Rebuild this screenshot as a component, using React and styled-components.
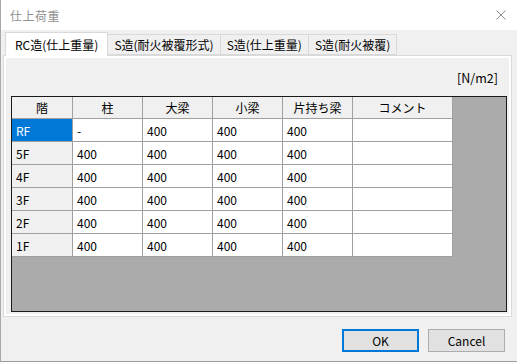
import React, { useState } from 'react'
import styled, { createGlobalStyle } from 'styled-components'

const Global = createGlobalStyle`
  html, body {
    margin: 0;
    padding: 0;
    background: #f0f0f0;
  }
  * {
    box-sizing: border-box;
  }
`

const FONT = `"Noto Sans CJK JP", "Noto Sans", sans-serif`

const Window = styled.div`
  width: 517px;
  height: 362px;
  display: flex;
  flex-direction: column;
  background: #f0f0f0;
  border-left: 1px solid #a8a8a8;
  border-bottom: 1px solid #9c9c9c;
  font-family: ${FONT};
  font-size: 12px;
  color: #000;
  overflow: hidden;
`

const TitleBar = styled.div`
  height: 30px;
  flex: none;
  display: flex;
  align-items: center;
  justify-content: space-between;
  padding: 0 9px 0 9px;
  background: #fff;
`

const Title = styled.span`
  color: #8f8f8f;
  font-size: 12px;
  letter-spacing: 0.5px;
`

const Close = styled.button`
  width: 14px;
  height: 14px;
  padding: 0;
  border: none;
  background: transparent;
  display: flex;
  align-items: center;
  justify-content: center;
  svg {
    width: 10px;
    height: 10px;
  }
`

const Body = styled.div`
  flex: 1;
  display: flex;
  flex-direction: column;
  padding: 2px 5px 0 2px;
`

const TabBar = styled.div`
  display: flex;
  align-items: flex-end;
  height: 23px;
  padding-left: 2px;
  position: relative;
  z-index: 1;
`

const Tab = styled.button`
  height: ${p => (p.$active ? '24px' : '21px')};
  margin-bottom: ${p => (p.$active ? '-1px' : '0')};
  margin-left: ${p => (p.$first ? '0' : '-1px')};
  padding: 0 ${p => (p.$active ? '9px' : '6px')};
  border: 1px solid #d9d9d9;
  border-bottom: ${p => (p.$active ? 'none' : '1px solid #d9d9d9')};
  background: ${p => (p.$active ? '#fff' : '#f0f0f0')};
  font-family: ${FONT};
  font-size: 12px;
  color: #000;
  white-space: nowrap;
  cursor: default;
  outline: none;
  position: relative;
  z-index: ${p => (p.$active ? 2 : 1)};
`

const Panel = styled.div`
  height: 262px;
  border: 1px solid #d9d9d9;
  background: #fff;
  padding: 2px;
`

const Page = styled.div`
  height: 100%;
  display: flex;
  flex-direction: column;
  background: #f0f0f0;
  padding: 0 2px 2px 5px;
`

const UnitRow = styled.div`
  height: 38px;
  display: flex;
  align-items: center;
  justify-content: flex-end;
  padding-right: 9px;
  font-size: 12.5px;
`

const Grid = styled.div`
  flex: 1;
  border: 1px solid #1a1a1a;
  background: #ababab;
`

const Row = styled.div`
  display: flex;
  height: ${p => (p.$head ? '22px' : '23px')};
`

const Cell = styled.div`
  flex: none;
  width: ${p => p.$w}px;
  height: 100%;
  display: flex;
  align-items: center;
  justify-content: ${p => (p.$center ? 'center' : 'flex-start')};
  padding: ${p => (p.$center ? '0' : '0 0 0 4px')};
  border-right: 1px solid #a0a0a0;
  border-bottom: 1px solid #a0a0a0;
  background: ${p => (p.$selected ? '#0078d7' : p.$head ? '#f0f0f0' : '#fff')};
  color: ${p => (p.$selected ? '#fff' : '#000')};
  font-size: 12px;
  white-space: nowrap;
`

const Footer = styled.div`
  display: flex;
  justify-content: flex-end;
  gap: 9px;
  padding: 12px 7px 0 0;
`

const Button = styled.button`
  width: 77px;
  height: 23px;
  padding: 0;
  border: ${p => (p.$default ? '2px solid #0078d7' : '1px solid #adadad')};
  background: #e1e1e1;
  font-family: ${FONT};
  font-size: 12px;
  color: #000;
  outline: none;
  cursor: default;
`

const columns = [
  { key: 'floor', label: '階', w: 61 },
  { key: 'col', label: '柱', w: 70 },
  { key: 'girder', label: '大梁', w: 70 },
  { key: 'beam', label: '小梁', w: 70 },
  { key: 'cant', label: '片持ち梁', w: 70 },
  { key: 'note', label: 'コメント', w: 100 },
]

const rows = [
  { floor: 'RF', col: '-', girder: '400', beam: '400', cant: '400', note: '' },
  { floor: '5F', col: '400', girder: '400', beam: '400', cant: '400', note: '' },
  { floor: '4F', col: '400', girder: '400', beam: '400', cant: '400', note: '' },
  { floor: '3F', col: '400', girder: '400', beam: '400', cant: '400', note: '' },
  { floor: '2F', col: '400', girder: '400', beam: '400', cant: '400', note: '' },
  { floor: '1F', col: '400', girder: '400', beam: '400', cant: '400', note: '' },
]

const tabs = ['RC造(仕上重量)', 'S造(耐火被覆形式)', 'S造(仕上重量)', 'S造(耐火被覆)']

export default function App() {
  const [active, setActive] = useState(0)

  return (
    <>
      <Global />
      <Window>
        <TitleBar>
          <Title>仕上荷重</Title>
          <Close>
            <svg viewBox="0 0 10 10" fill="none">
              <path d="M0.5 0.5L9.5 9.5M9.5 0.5L0.5 9.5" stroke="#8a8a8a" strokeWidth="1" />
            </svg>
          </Close>
        </TitleBar>
        <Body>
          <TabBar>
            {tabs.map((t, i) => (
              <Tab key={t} $active={i === active} $first={i === 0} onClick={() => setActive(i)}>
                {t}
              </Tab>
            ))}
          </TabBar>
          <Panel>
            <Page>
              <UnitRow>[N/m2]</UnitRow>
              <Grid>
                <Row $head>
                  {columns.map(c => (
                    <Cell key={c.key} $w={c.w} $head $center>
                      {c.label}
                    </Cell>
                  ))}
                </Row>
                {rows.map((r, ri) => (
                  <Row key={r.floor}>
                    {columns.map((c, ci) => (
                      <Cell
                        key={c.key}
                        $w={c.w}
                        $head={ci === 0}
                        $selected={ri === 0 && ci === 0}
                      >
                        {r[c.key]}
                      </Cell>
                    ))}
                  </Row>
                ))}
              </Grid>
            </Page>
          </Panel>
          <Footer>
            <Button $default>OK</Button>
            <Button>Cancel</Button>
          </Footer>
        </Body>
      </Window>
    </>
  )
}
